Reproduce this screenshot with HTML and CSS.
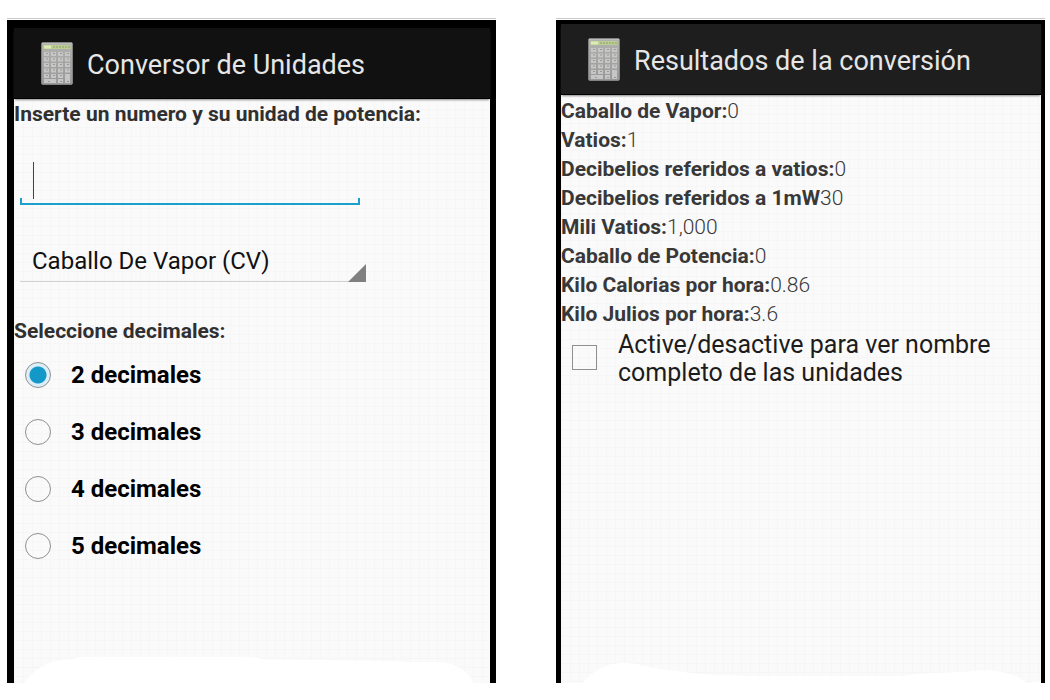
FILE: index.html
```html
<!DOCTYPE html>
<html lang="es">
<head>
<meta charset="utf-8">
<meta name="viewport" content="width=device-width, initial-scale=1">
<title>Conversor de Unidades</title>
<link rel="stylesheet" href="styles.css">
</head>
<body>
<svg class="defs" aria-hidden="true">
  <defs>
    <linearGradient id="case" x1="0" y1="0" x2="0" y2="1">
      <stop offset="0" stop-color="#b2b2af"/>
      <stop offset="1" stop-color="#989898"/>
    </linearGradient>
    <symbol id="calculator" viewBox="0 0 32 43">
      <rect x="0.5" y="0.5" width="31" height="42" rx="1.5" fill="url(#case)" stroke="#828282"/>
      <rect x="1" y="1" width="30" height="1" fill="#bcbcb8"/>
      <rect x="2.5" y="3" width="27" height="4" fill="#bccd96"/>
      <path d="M3 5h7" stroke="#dcecb2" stroke-width="3"/>
      <path d="M12 5h17" stroke="#a3b67e" stroke-width="2" stroke-dasharray="2 1"/>
      <g fill="none" stroke="#c6c6c6" stroke-width="4">
        <path d="M3 12h26M3 17.500h26M3 23h26M3 28.500h26M3 34h19" stroke-dasharray="5 2"/>
        <path d="M3 39h12M17 39h5"/>
        <path d="M26.500 32v9" stroke-width="5"/>
      </g>
      <g fill="none" stroke="#989898" stroke-width="1">
        <path d="M5 11.500h24M5 17h24M5 22.500h24M5 28h24M5 33.500h16" stroke-dasharray="2 5"/>
        <path d="M7 39.500h2M19 39.500h2M26 39.500h2"/>
      </g>
    </symbol>
  </defs>
</svg>
<main class="screens">
  <section class="phone phone-input">
    <header class="bar">
      <svg class="bar-icon" aria-hidden="true"><use href="#calculator"/></svg>
      <h1 class="bar-title">Conversor de Unidades</h1>
    </header>
    <form class="body">
      <label class="label" for="amount">Inserte un numero y su unidad de potencia:</label>
      <input class="amount" id="amount" type="text" inputmode="decimal">
      <select class="unit" aria-label="Unidad de potencia">
        <option>Caballo De Vapor (CV)</option>
      </select>
      <fieldset class="decimals">
        <legend class="label">Seleccione decimales:</legend>
        <label class="choice"><input class="radio" type="radio" name="decimals" checked>2 decimales</label>
        <label class="choice"><input class="radio" type="radio" name="decimals">3 decimales</label>
        <label class="choice"><input class="radio" type="radio" name="decimals">4 decimales</label>
        <label class="choice"><input class="radio" type="radio" name="decimals">5 decimales</label>
      </fieldset>
    </form>
    <svg class="torn" viewBox="0 0 476 27" preserveAspectRatio="none" aria-hidden="true">
      <path fill="#fff" d="M10 27C20 12 38 3 58 3L66 1H234Q242 1 248 3L300 4L380 5L394 6H424C444 7 454 16 460 27Z"/>
    </svg>
  </section>
  <section class="phone phone-results">
    <header class="bar">
      <svg class="bar-icon" aria-hidden="true"><use href="#calculator"/></svg>
      <h1 class="bar-title">Resultados de la conversión</h1>
    </header>
    <div class="body">
      <dl class="results">
        <div class="result"><dt>Caballo de Vapor:</dt><dd>0</dd></div>
        <div class="result"><dt>Vatios:</dt><dd>1</dd></div>
        <div class="result"><dt>Decibelios referidos a vatios:</dt><dd>0</dd></div>
        <div class="result"><dt>Decibelios referidos a 1mW</dt><dd>30</dd></div>
        <div class="result"><dt>Mili Vatios:</dt><dd>1,000</dd></div>
        <div class="result"><dt>Caballo de Potencia:</dt><dd>0</dd></div>
        <div class="result"><dt>Kilo Calorias por hora:</dt><dd>0.86</dd></div>
        <div class="result"><dt>Kilo Julios por hora:</dt><dd>3.6</dd></div>
      </dl>
      <label class="toggle"><input class="check" type="checkbox"><span>Active/desactive para ver nombre completo de las unidades</span></label>
    </div>
    <svg class="torn" viewBox="0 0 480 27" preserveAspectRatio="none" aria-hidden="true">
      <path fill="#fff" d="M0 27V26L22 27C30 16 44 7 62 7C78 7 88 12 106 14C122 15 134 19 162 19L184 20H342C358 17 374 17 400 16C426 13 448 13 466 27Q472 25 480 25V27Z"/>
    </svg>
  </section>
</main>
</body>
</html>
```
FILE: styles.css
```css
* {
  box-sizing: border-box;
}

body {
  margin: 0;
  background: #fff;
  color: #000;
  font-family: Roboto, "Liberation Sans", sans-serif;
}

.defs {
  position: absolute;
  width: 0;
  height: 0;
}

.screens {
  display: grid;
  grid-template-columns: 1fr 1fr;
  gap: 60px;
  min-height: 100vh;
  padding: 18px 5px 17px 7px;
}

.phone {
  display: flex;
  flex-direction: column;
  margin-top: 2px;
  border: solid #000;
  background-color: #fafafa;
  background-image:
    linear-gradient(to right, #f6f6f6 1px, transparent 1px),
    linear-gradient(to bottom, #f6f6f6 1px, transparent 1px);
  background-size: 9px 9px;
  box-shadow: 0 -1px #fff, 0 -2px #c8c8c8;
}

.phone-input {
  border-width: 8px 6px 0 7px;
}

.phone-results {
  border-width: 4px 4px 0 5px;
}

.bar {
  display: flex;
  align-items: center;
  height: 71px;
  padding-left: 27px;
  border-bottom: 1px solid #000;
  background: #111;
  box-shadow: 0 2px 2px -1px #888;
}

.phone-results .bar {
  background: #1e1e1e;
}

.bar-icon {
  flex: none;
  width: 32px;
  height: 43px;
}

.bar-title {
  margin: 0 0 0 14px;
  padding-top: 4px;
  color: #e6e6e6;
  font-size: 27px;
  font-weight: 400;
  line-height: 32px;
}

.body {
  display: flex;
  flex-direction: column;
  align-items: flex-start;
}

.label {
  padding: 0;
  color: #303030;
  font-size: 21px;
  font-weight: 700;
  line-height: 30px;
}

.amount {
  width: 340px;
  max-width: 90%;
  height: 54px;
  margin: 22px 0 0 6px;
  padding: 0 13px;
  border: 0;
  outline: 0;
  background:
    linear-gradient(#444, #444) 13px 11px / 1px 37px no-repeat,
    linear-gradient(#1d9fcb, #1d9fcb) 0 100% / 100% 2px no-repeat,
    linear-gradient(#1d9fcb, #1d9fcb) 0 100% / 2px 7px no-repeat,
    linear-gradient(#1d9fcb, #1d9fcb) 100% 100% / 2px 7px no-repeat;
  font: 24px Roboto, sans-serif;
}

.unit {
  width: 346px;
  max-width: 90%;
  height: 42px;
  margin: 35px 0 0 6px;
  padding: 0 12px;
  border: 0;
  border-radius: 0;
  appearance: none;
  background:
    linear-gradient(135deg, transparent 48%, #808080 52%) 100% 100% / 18px 18px no-repeat,
    linear-gradient(#d2d2d2, #d2d2d2) 0 100% / 100% 1px no-repeat;
  color: #111;
  font: 24px Roboto, sans-serif;
}

.decimals {
  margin: 34px 0 0;
  padding: 0;
  border: 0;
}

.choice {
  display: flex;
  align-items: center;
  gap: 20px;
  height: 57px;
  padding-left: 11px;
  font-size: 24px;
  font-weight: 700;
}

.radio {
  width: 26px;
  height: 26px;
  margin: 0;
  border: 1px solid #909090;
  border-radius: 50%;
  appearance: none;
}

.radio:checked {
  background: radial-gradient(circle, #1398c8 8px, #dceef7 9px);
}

.results {
  margin: 0;
  padding-top: 2px;
  color: #383838;
  font-size: 21px;
  line-height: 29px;
}

.result {
  display: flex;
}

.result dt {
  font-weight: 700;
}

.result dd {
  margin: 0;
  font-weight: 300;
}

.toggle {
  display: flex;
  align-items: flex-start;
  gap: 21px;
  margin-top: 2px;
  padding: 0 40px 0 11px;
  color: #1c1c1c;
  font-size: 25px;
  line-height: 28px;
}

.check {
  flex: none;
  width: 25px;
  height: 25px;
  margin: 14px 0 0;
  border: 1px solid #909090;
  appearance: none;
}

.torn {
  width: 100%;
  height: 27px;
  margin-top: auto;
}
```
